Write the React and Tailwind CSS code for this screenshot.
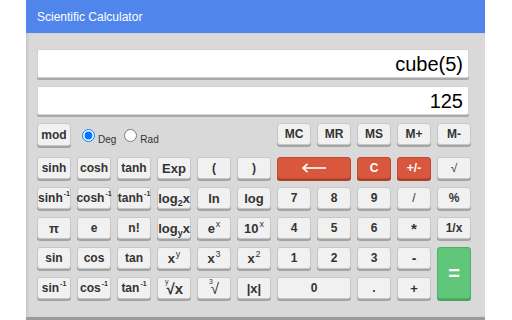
import React from "react";

function Btn({ children, className = "" }) {
  return (
    <button
      className={`h-[22px] rounded-[3px] border border-[#c6c6c6] bg-[#f1f1f1] shadow-[0_2px_0_#a4a4a4] text-[12px] font-bold text-[#333] flex items-center justify-center leading-none p-0 ${className}`}
    >
      {children}
    </button>
  );
}

function Red({ children, className = "" }) {
  return (
    <button
      className={`h-[22px] rounded-[3px] border border-[#c24a30] bg-[#d9583d] shadow-[0_2px_0_#a8402a] text-[12px] font-bold text-white flex items-center justify-center leading-none p-0 ${className}`}
    >
      {children}
    </button>
  );
}

const S = ({ children }) => <sup className="text-[7px] top-[-0.6em] ml-[1px]">{children}</sup>;
const B = ({ children }) => <sub className="text-[9px] bottom-[-0.5em]">{children}</sub>;
const Sp = ({ children }) => <sup className="text-[9px] top-[-0.45em] ml-[1px] font-normal">{children}</sup>;

export default function App() {
  return (
    <div className="w-[512px] h-[320px] bg-white overflow-hidden font-['Liberation_Sans',Arial,sans-serif]">
      <div className="ml-[26px] w-[459px] h-full flex flex-col">
        <div className="h-[33px] shrink-0 bg-[#5086ec] text-white text-[12px] pl-[11px] flex items-center">
          Scientific Calculator
        </div>
        <div className="flex-1 bg-[#d9d9d9] shadow-[inset_2px_0_2px_#c9c9c9] pl-[11px] pt-[16px] flex flex-col">
          <div className="w-[432px] h-[29px] bg-white border border-[#d2d2d2] rounded-[2px] shadow-[0_2px_0_#a8a8a8] flex items-center justify-end pr-[5px] text-[20px] leading-none text-black">
            cube(5)
          </div>
          <div className="mt-[8px] w-[432px] h-[29px] bg-white border border-[#d2d2d2] rounded-[2px] shadow-[0_2px_0_#a8a8a8] flex items-center justify-end pr-[5px] text-[20px] leading-none text-black">
            125
          </div>
          <div className="mt-[8px] grid grid-cols-[repeat(11,34px)] gap-x-[6px] h-[24px] items-start">
            <Btn className="h-[23px]">mod</Btn>
            <div className="col-span-5 flex items-center h-[24px] pl-[5px]">
              <input type="radio" name="u" defaultChecked className="m-0 w-[13px] h-[13px]" />
              <span className="text-[10px] text-[#333] ml-[3px] pt-[8px]">Deg</span>
              <input type="radio" name="u" className="m-0 ml-[8px] w-[13px] h-[13px]" />
              <span className="text-[10px] text-[#333] ml-[3px] pt-[8px]">Rad</span>
            </div>
            <Btn className="text-[11px]">MC</Btn>
            <Btn className="text-[11px]">MR</Btn>
            <Btn className="text-[11px]">MS</Btn>
            <Btn className="text-[11px]">M+</Btn>
            <Btn className="text-[11px]">M-</Btn>
          </div>
          <div className="mt-[10px] grid grid-cols-[repeat(11,34px)] grid-rows-[repeat(5,24px)] gap-x-[6px] gap-y-[6px] items-start">
            <Btn>sinh</Btn>
            <Btn>cosh</Btn>
            <Btn>tanh</Btn>
            <Btn className="text-[13px]">Exp</Btn>
            <Btn>(</Btn>
            <Btn>)</Btn>
            <Red className="col-span-2">
              <svg width="26" height="10" viewBox="0 0 26 10">
                <path d="M2 5H25" stroke="white" strokeWidth="1.6" />
                <path d="M6.5 0.8L2 5L6.5 9.2" stroke="white" strokeWidth="1.6" fill="none" />
              </svg>
            </Red>
            <Red>C</Red>
            <Red>+/-</Red>
            <Btn className="font-normal text-[#9a9a9a]">√</Btn>

            <Btn className="text-[11.5px]">sinh<S>-1</S></Btn>
            <Btn className="text-[11.5px]">cosh<S>-1</S></Btn>
            <Btn className="text-[11.5px]">tanh<S>-1</S></Btn>
            <Btn className="text-[13px]">log<B>2</B>x</Btn>
            <Btn className="text-[13px]">ln</Btn>
            <Btn className="text-[13px]">log</Btn>
            <Btn>7</Btn>
            <Btn>8</Btn>
            <Btn>9</Btn>
            <Btn className="font-normal">/</Btn>
            <Btn>%</Btn>

            <Btn className="text-[13px]">π</Btn>
            <Btn>e</Btn>
            <Btn>n!</Btn>
            <Btn className="text-[13px]">log<B>y</B>x</Btn>
            <Btn className="text-[13px]">e<Sp>x</Sp></Btn>
            <Btn className="text-[13px]">10<Sp>x</Sp></Btn>
            <Btn>4</Btn>
            <Btn>5</Btn>
            <Btn>6</Btn>
            <Btn className="text-[15px]">*</Btn>
            <Btn>1/x</Btn>

            <Btn>sin</Btn>
            <Btn>cos</Btn>
            <Btn>tan</Btn>
            <Btn className="text-[13px]">x<Sp>y</Sp></Btn>
            <Btn className="text-[13px]">x<Sp>3</Sp></Btn>
            <Btn className="text-[13px]">x<Sp>2</Sp></Btn>
            <Btn>1</Btn>
            <Btn>2</Btn>
            <Btn>3</Btn>
            <Btn className="text-[14px]">-</Btn>
            <button className="row-span-2 h-[52px] rounded-[3px] border border-[#4fb067] bg-[#60c679] shadow-[0_2px_0_#49a35f] text-white text-[20px] font-bold flex items-center justify-center leading-none p-0">
              =
            </button>

            <Btn className="text-[11.5px]">sin<S>-1</S></Btn>
            <Btn className="text-[11.5px]">cos<S>-1</S></Btn>
            <Btn className="text-[11.5px]">tan<S>-1</S></Btn>
            <Btn className="text-[15px]"><sup className="text-[7px] top-[-0.9em] -mr-[2px] font-normal">y</sup>√x</Btn>
            <Btn className="text-[15px] font-normal"><sup className="text-[7px] top-[-0.9em] -mr-[2px]">3</sup>√</Btn>
            <Btn className="text-[13px]">|x|</Btn>
            <Btn className="col-span-2">0</Btn>
            <Btn>.</Btn>
            <Btn className="text-[13px]">+</Btn>
          </div>
        </div>
        <div className="h-[3px] shrink-0 bg-[#9c9c9c]" />
      </div>
    </div>
  );
}
